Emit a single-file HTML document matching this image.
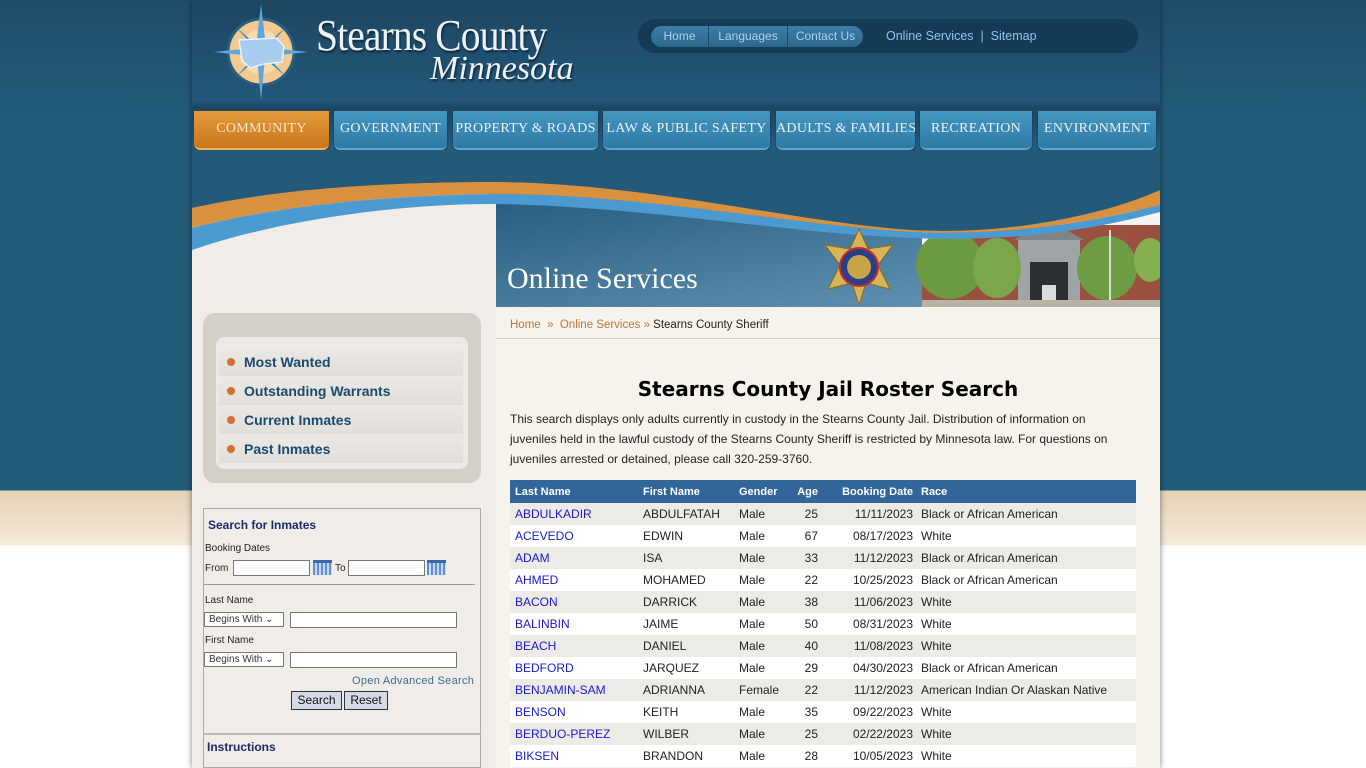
<!DOCTYPE html>
<html><head><meta charset="utf-8">
<style>
*{margin:0;padding:0;box-sizing:border-box}
html{overflow:hidden;height:768px}
body{width:1366px;height:768px;overflow:hidden;font-family:"Liberation Sans",Arial,sans-serif;background:linear-gradient(#1f4d69 0,#235c7b 120px,#235c7b 490px,#e6d2b6 491px,#f4e9db 545px,#fff 546px);position:relative}
#wrap{position:absolute;left:192px;top:0;width:968px;height:768px;background:#f0ede8;box-shadow:0 0 6px rgba(0,0,0,.5);overflow:hidden}
.abs{position:absolute}
#hdr{left:0;top:0;width:968px;height:160px;background:linear-gradient(#1d4662,#23587a 100px,#1c4561 108px,#255f80 150px)}
.tab{position:absolute;top:111px;height:39px;border-radius:0 0 6px 6px;background:linear-gradient(#4596c2,#2f7aa6);color:#eaf3f8;font-family:"Liberation Serif",serif;font-size:14px;letter-spacing:.3px;text-align:center;line-height:36px;box-shadow:0 2px 2px rgba(0,0,0,.4);border-bottom:2px solid #5aa8d2;white-space:nowrap;overflow:hidden}
.tab.on{background:linear-gradient(#e49a3a,#c9771c);color:#fbe9cc;border-bottom:2px solid #f0b25a}
#pill{left:446px;top:19px;width:500px;height:34px;border-radius:17px;background:#153a55}
.pb{position:absolute;top:7px;height:21px;background:linear-gradient(#3d7ea6,#2a678f);color:#a9d3ee;font-size:12px;line-height:21px;text-align:center;border-right:1px solid #1c4a68}
.tl{position:absolute;top:10px;color:#8cc6ee;font-size:12.5px}
#menu{left:11px;top:313px;width:278px;height:170px;border-radius:12px;background:#d4d0c8}
#menuin{position:absolute;left:13px;top:24px;width:252px;height:132px;border-radius:8px;background:#eceae6}
.mi{position:absolute;left:3px;width:244px;height:28px;background:linear-gradient(#ebe9e5,#e2dfda);color:#1a4a6b;font-weight:bold;font-size:14px;line-height:28px;padding-left:25px}
.mi:before{content:"";position:absolute;left:8px;top:10px;width:8px;height:8px;border-radius:50%;background:#d36f33}
#srch{left:11px;top:508px;width:278px;height:260px;border:1px solid #aaa;background:#f0ede8;font-size:10px;color:#222}
input.t{position:absolute;height:16px;border:1px solid #777;background:#fff}
.sel{position:absolute;height:15px;border:1px solid #777;background:#fff;font-size:10px;line-height:13px;padding-left:4px;color:#333}
.cal{position:absolute;width:19px;height:15px;background:repeating-linear-gradient(90deg,#5b8ed2 0 2px,#c8daf2 2px 4px);border-top:3px solid #3a67a8}
.btn{position:absolute;top:691px;height:19px;border:1px solid #333;background:#d4dbe6;font-size:12px;text-align:center;line-height:17px;color:#111}
#content{left:304px;top:307px;width:664px;height:461px;background:#f6f3ec}
table{border-collapse:collapse;position:absolute;left:318px;top:480px;width:626px;font-size:12px;table-layout:fixed}
th{background:#326599;color:#fff;font-size:11px;text-align:left;height:23px;padding-left:5px;white-space:nowrap}
td{height:22px;padding-left:5px;color:#222;white-space:nowrap}
tr:nth-child(even) td{background:#ecebe6}
tr:nth-child(odd) td{background:#fff}
td a{color:#1a1acc;text-decoration:none}
.r{text-align:right;padding-right:6px}
</style></head><body>
<div id="wrap">
 <div id="hdr" class="abs"></div>
 <svg class="abs" style="left:14px;top:2px" width="110" height="100" viewBox="0 0 110 100">
  <circle cx="55" cy="50" r="33" fill="#f2c98e" stroke="#2b5d80" stroke-width="3"/>
  <circle cx="55" cy="50" r="22" fill="#f7dcb0"/>
  <polygon points="55,2 60,45 55,98 50,45" fill="#5ea6dc"/>
  <polygon points="8,50 55,45 102,50 55,55" fill="#5ea6dc"/>
  <polygon points="30,25 56,48 80,75 54,52" fill="#3d86c2"/>
  <polygon points="80,25 56,52 30,75 54,48" fill="#3d86c2"/>
  <path d="M33,38 L70,36 L78,44 L76,60 L58,62 L44,66 L36,58 Z" fill="#a9cdee" stroke="#e8f2fb" stroke-width="1.5"/>
 </svg>
 <div class="abs" style="left:124px;top:10px;font-family:'Liberation Serif',serif;font-size:44px;color:#eef2f5;letter-spacing:-1px;text-shadow:1px 2px 2px #0c2638;transform:scaleX(.9);transform-origin:left">Stearns County</div>
 <div class="abs" style="left:238px;top:50px;font-family:'Liberation Serif',serif;font-style:italic;font-size:34px;color:#eef2f5;text-shadow:1px 2px 2px #0c2638">Minnesota</div>
 <div id="pill" class="abs">
  <div class="pb" style="left:13px;width:58px;border-radius:11px 0 0 11px">Home</div>
  <div class="pb" style="left:71px;width:79px">Languages</div>
  <div class="pb" style="left:150px;width:75px;border-radius:0 11px 11px 0;border-right:none">Contact Us</div>
  <div class="tl" style="left:248px">Online Services&nbsp; |&nbsp; Sitemap</div>
 </div>
 <div class="tab on" style="left:2px;width:135px">COMMUNITY</div>
 <div class="tab" style="left:142px;width:113px">GOVERNMENT</div>
 <div class="tab" style="left:261px;width:145px">PROPERTY &amp; ROADS</div>
 <div class="tab" style="left:411px;width:167px">LAW &amp; PUBLIC SAFETY</div>
 <div class="tab" style="left:584px;width:139px">ADULTS &amp; FAMILIES</div>
 <div class="tab" style="left:728px;width:112px">RECREATION</div>
 <div class="tab" style="left:846px;width:118px">ENVIRONMENT</div>
 <svg class="abs" style="left:0;top:150px" width="968" height="157" viewBox="0 0 968 157">
  <defs><linearGradient id="bn" x1="0" y1="0" x2="1" y2="1"><stop offset="0" stop-color="#245a7c"/><stop offset="1" stop-color="#6d9cbc"/></linearGradient></defs>
  <rect width="968" height="157" fill="#255f80"/>
  <rect x="0" y="40" width="304" height="117" fill="#f0ede8"/>
  <rect x="304" y="40" width="664" height="117" fill="url(#bn)"/>
  <rect x="730" y="60" width="238" height="97" fill="#f4f4f2"/>
  <polygon points="780,75 968,75 968,157 730,157 730,95" fill="#9a5140"/>
  <rect x="826" y="88" width="62" height="69" fill="#9fa4a6"/>
  <polygon points="822,90 857,70 892,90" fill="#7d8589"/>
  <rect x="838" y="112" width="38" height="45" fill="#2b2f31"/>
  <rect x="850" y="135" width="14" height="22" fill="#d8dcdc"/>
  <ellipse cx="758" cy="115" rx="34" ry="34" fill="#6c9a40"/>
  <ellipse cx="805" cy="118" rx="24" ry="30" fill="#7ba64a"/>
  <ellipse cx="915" cy="118" rx="30" ry="32" fill="#6e9c42"/>
  <ellipse cx="958" cy="110" rx="16" ry="22" fill="#86b050"/>
  <rect x="917" y="80" width="2" height="77" fill="#ddd"/>
  <rect x="730" y="150" width="238" height="7" fill="#b9b2a5"/>
  <path d="M0,78 C60,62 160,46 300,44 C450,44 600,75 720,82 C820,86 900,72 968,55 L968,62 C900,80 820,92 720,88 C600,84 450,56 300,54 C200,54 80,72 0,100 Z" fill="#4c9ad2"/>
  <path d="M0,58 C60,45 150,32 300,32 C450,32 600,72 720,80 C800,85 900,70 968,40 L968,55 C900,72 820,86 720,82 C600,75 450,44 300,44 C160,46 60,62 0,78 Z" fill="#d8913f"/>
  <path d="M0,0 H968 V40 C900,70 800,85 720,80 C600,72 450,32 300,32 C150,32 60,45 0,58 Z" fill="#24597a"/>
 </svg>
 <svg class="abs" style="left:626px;top:227px" width="82" height="80" viewBox="0 0 82 80">
  <polygon points="41,2 50,22 75,18 60,38 72,62 48,56 41,78 34,56 10,62 22,38 7,18 32,22" fill="#d6b458" stroke="#8a6a1e"/>
  <circle cx="41" cy="40" r="19" fill="#2a3e8a" stroke="#c62b2b" stroke-width="2"/>
  <circle cx="41" cy="40" r="12" fill="#c6a44a"/>
 </svg>
 <div class="abs" style="left:315px;top:262px;font-family:'Liberation Serif',serif;font-size:30px;color:#fff">Online Services</div>
 <div id="menu" class="abs"><div id="menuin">
  <div class="mi" style="top:11px">Most Wanted</div>
  <div class="mi" style="top:40px">Outstanding Warrants</div>
  <div class="mi" style="top:69px">Current Inmates</div>
  <div class="mi" style="top:98px">Past Inmates</div>
 </div></div>
 <div id="srch" class="abs">
  <div class="abs" style="left:4px;top:9px;font-size:12px;font-weight:bold;color:#1e2a6a">Search for Inmates</div>
  <div class="abs" style="left:1px;top:34px">Booking Dates</div>
  <div class="abs" style="left:1px;top:54px">From</div>
  <div class="abs" style="left:131px;top:54px">To</div>
  <div class="abs" style="left:0;top:75px;width:271px;border-top:1px solid #999"></div>
  <div class="abs" style="left:1px;top:86px">Last Name</div>
  <div class="abs" style="left:1px;top:126px">First Name</div>
  <div class="abs" style="left:148px;top:166px;font-size:11px;color:#3a6a8a;letter-spacing:.3px">Open Advanced Search</div>
 </div>
 <input class="t" style="left:41px;top:560px;width:77px">
 <div class="cal" style="left:121px;top:560px"></div>
 <input class="t" style="left:156px;top:560px;width:77px">
 <div class="cal" style="left:235px;top:560px"></div>
 <div class="sel" style="left:12px;top:612px;width:80px">Begins With ⌄</div>
 <input class="t" style="left:98px;top:612px;width:167px">
 <div class="sel" style="left:12px;top:652px;width:80px">Begins With ⌄</div>
 <input class="t" style="left:98px;top:652px;width:167px">
 <div class="btn" style="left:99px;width:51px">Search</div>
 <div class="btn" style="left:152px;width:44px">Reset</div>
 <div class="abs" style="left:11px;top:733px;width:278px;border-top:2px solid #bbb"></div>
 <div class="abs" style="left:15px;top:740px;font-size:12px;font-weight:bold;color:#1e2a6a">Instructions</div>
 <div id="content" class="abs"></div>
 <div class="abs" style="left:318px;top:319px;font-size:11.5px;color:#b8783a">Home &nbsp;»&nbsp; Online Services » <span style="color:#222">Stearns County Sheriff</span></div>
 <div class="abs" style="left:304px;top:338px;width:664px;border-top:1px solid #d2cec6"></div>
 <div class="abs" style="left:304px;top:377px;width:664px;text-align:center;font-family:'DejaVu Sans',sans-serif;font-weight:bold;font-size:20px;color:#000">Stearns County Jail Roster Search</div>
 <div class="abs" style="left:318px;top:409px;width:600px;font-size:12px;line-height:20px;color:#222">This search displays only adults currently in custody in the Stearns County Jail. Distribution of information on juveniles held in the lawful custody of the Stearns County Sheriff is restricted by Minnesota law. For questions on juveniles arrested or detained, please call 320-259-3760.</div>
 <table>
  <colgroup><col style="width:128px"><col style="width:96px"><col style="width:50px"><col style="width:40px"><col style="width:95px"><col></colgroup>
  <tr><th>Last Name</th><th>First Name</th><th>Gender</th><th class="r" style="padding-left:0">Age</th><th class="r" style="padding-left:0">Booking Date</th><th style="padding-left:2px">Race</th></tr>
  <tr><td><a>ABDULKADIR</a></td><td>ABDULFATAH</td><td>Male</td><td class="r">25</td><td class="r">11/11/2023</td><td style="padding-left:2px">Black or African American</td></tr>
  <tr><td><a>ACEVEDO</a></td><td>EDWIN</td><td>Male</td><td class="r">67</td><td class="r">08/17/2023</td><td style="padding-left:2px">White</td></tr>
  <tr><td><a>ADAM</a></td><td>ISA</td><td>Male</td><td class="r">33</td><td class="r">11/12/2023</td><td style="padding-left:2px">Black or African American</td></tr>
  <tr><td><a>AHMED</a></td><td>MOHAMED</td><td>Male</td><td class="r">22</td><td class="r">10/25/2023</td><td style="padding-left:2px">Black or African American</td></tr>
  <tr><td><a>BACON</a></td><td>DARRICK</td><td>Male</td><td class="r">38</td><td class="r">11/06/2023</td><td style="padding-left:2px">White</td></tr>
  <tr><td><a>BALINBIN</a></td><td>JAIME</td><td>Male</td><td class="r">50</td><td class="r">08/31/2023</td><td style="padding-left:2px">White</td></tr>
  <tr><td><a>BEACH</a></td><td>DANIEL</td><td>Male</td><td class="r">40</td><td class="r">11/08/2023</td><td style="padding-left:2px">White</td></tr>
  <tr><td><a>BEDFORD</a></td><td>JARQUEZ</td><td>Male</td><td class="r">29</td><td class="r">04/30/2023</td><td style="padding-left:2px">Black or African American</td></tr>
  <tr><td><a>BENJAMIN-SAM</a></td><td>ADRIANNA</td><td>Female</td><td class="r">22</td><td class="r">11/12/2023</td><td style="padding-left:2px">American Indian Or Alaskan Native</td></tr>
  <tr><td><a>BENSON</a></td><td>KEITH</td><td>Male</td><td class="r">35</td><td class="r">09/22/2023</td><td style="padding-left:2px">White</td></tr>
  <tr><td><a>BERDUO-PEREZ</a></td><td>WILBER</td><td>Male</td><td class="r">25</td><td class="r">02/22/2023</td><td style="padding-left:2px">White</td></tr>
  <tr><td><a>BIKSEN</a></td><td>BRANDON</td><td>Male</td><td class="r">28</td><td class="r">10/05/2023</td><td style="padding-left:2px">White</td></tr>
 </table>
</div>
</body></html>
